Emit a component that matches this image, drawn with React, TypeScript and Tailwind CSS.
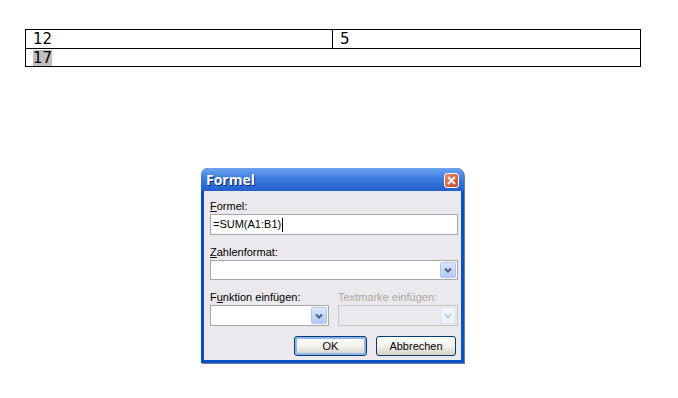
import { SVGProps } from "react"

const ui = { fontFamily: '"Liberation Sans", Arial, sans-serif' }

export default function App() {
  return (
    <div className="w-[678px] h-[398px] bg-white overflow-hidden">
      <div className="pt-[29px] pl-[25px]">
        <table
          className="w-[616px] border-collapse text-[15px] leading-[16px] text-black"
          style={{ fontFamily: '"DejaVu Sans", Verdana, sans-serif' }}
        >
          <tbody>
            <tr className="h-[19px]">
              <td className="border border-black pl-[7px] w-[307px] align-middle">12</td>
              <td className="border border-black pl-[7px] align-middle">5</td>
            </tr>
            <tr className="h-[18px]">
              <td colSpan={2} className="border border-black pl-[7px] align-middle">
                <span className="bg-[#c0c0c0] inline-block leading-[16px]">17</span>
              </td>
            </tr>
          </tbody>
        </table>
      </div>

      <div
        className="ml-[201px] mt-[101px] w-[263px] h-[195px] flex flex-col rounded-t-[7px] bg-[#0b4fc6] shadow-[1px_1px_0_#6d7fa8]"
        style={ui}
      >
        <div className="h-[23px] shrink-0 flex items-center pl-[5px] pr-[5px] rounded-t-[7px] bg-gradient-to-b from-[#6ea3ef] via-[#3a7ade] to-[#2260cd]">
          <span
            className="text-white font-bold text-[14px] [text-shadow:1px_1px_0_#0a246a]"
            style={{ fontFamily: '"Open Sans", "Liberation Sans", sans-serif' }}
          >
            Formel
          </span>
          <button className="ml-auto mt-[2px] w-[15px] h-[15px] rounded-[3px] border border-white flex items-center justify-center bg-gradient-to-br from-[#e98a6a] to-[#c8482a]">
            <XIcon className="w-[9px] h-[9px] text-white" />
          </button>
        </div>

        <div className="flex-1 mx-[3px] mb-[3px] bg-[#ebe9ed] pl-[6px] pr-[3px] pt-[9px] text-[11px] leading-[13px] text-black">
          <div>
            <span className="underline">F</span>ormel:
          </div>
          <div className="mt-[1px] h-[21px] w-[248px] bg-white border border-[#a7a6aa] flex items-center pl-[2px]">
            <span>=SUM(A1:B1)</span>
            <span className="w-px h-[14px] bg-black ml-[1px]" />
          </div>

          <div className="mt-[11px]">
            <span className="underline">Z</span>ahlenformat:
          </div>
          <div className="mt-[1px] h-[20px] w-[248px] bg-white border border-[#a7a6aa] flex justify-end p-px">
            <DropButton />
          </div>

          <div className="mt-[11px] flex gap-[9px]">
            <div className="w-[119px]">
              <div>
                F<span className="underline">u</span>nktion einfügen:
              </div>
              <div className="mt-[1px] h-[21px] bg-white border border-[#a7a6aa] flex justify-end p-px">
                <DropButton />
              </div>
            </div>
            <div className="w-[120px]">
              <div className="text-[#aca899]">Textmarke einfügen:</div>
              <div className="mt-[1px] h-[21px] bg-[#ebe9ed] border border-[#c9c7ba] flex justify-end p-px">
                <DropButton disabled />
              </div>
            </div>
          </div>

          <div className="mt-[10px] flex justify-end gap-[9px] pr-[2px]">
            <button className="w-[73px] h-[20px] rounded-[3px] border border-[#003c74] bg-gradient-to-b from-white via-[#f3f2ee] to-[#d6d2c6] shadow-[inset_0_0_0_2px_#8fb5ee] text-[11px] text-black">
              OK
            </button>
            <button className="w-[80px] h-[20px] rounded-[3px] border border-[#003c74] bg-gradient-to-b from-white via-[#f3f2ee] to-[#d6d2c6] text-[11px] text-black">
              Abbrechen
            </button>
          </div>
        </div>
      </div>
    </div>
  )
}

function DropButton({ disabled }: { disabled?: boolean }) {
  return (
    <div
      className={
        disabled
          ? "w-[16px] h-full rounded-[2px] border border-[#dbe4f7] bg-[#eef3fd] flex items-center justify-center text-[#c2cde3]"
          : "w-[16px] h-full rounded-[2px] border border-[#b0c4f0] bg-gradient-to-b from-[#dbe6fd] to-[#b3c9f5] flex items-center justify-center text-[#4d6185]"
      }
    >
      <ChevronIcon className="w-[8px] h-[6px]" />
    </div>
  )
}

function ChevronIcon(props: SVGProps<SVGSVGElement>) {
  return (
    <svg {...props} viewBox="0 0 8 6" fill="none" stroke="currentColor" strokeWidth="2">
      <path d="M1 1.5 4 4.5 7 1.5" />
    </svg>
  )
}

function XIcon(props: SVGProps<SVGSVGElement>) {
  return (
    <svg {...props} viewBox="0 0 9 9" fill="none" stroke="currentColor" strokeWidth="2">
      <path d="M1 1 8 8" />
      <path d="M8 1 1 8" />
    </svg>
  )
}
